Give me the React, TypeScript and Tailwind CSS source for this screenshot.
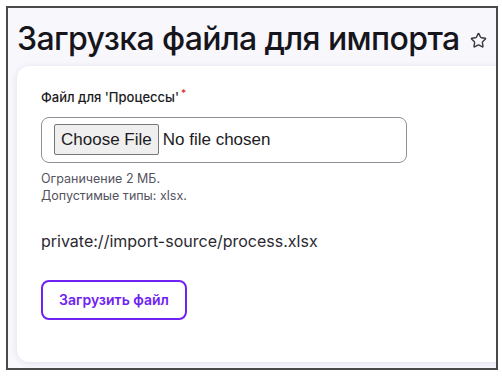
import { Star } from "lucide-react";

const INTER = { fontFamily: "Inter, 'Noto Sans', sans-serif" };

export default function App() {
    return (
        <div className="w-[502px] h-[382px] bg-white pt-[6px] pl-[6px]" style={INTER}>
            <div className="w-[492px] h-[364px] border-2 border-[#4a4a4a] bg-[#f8f7fc] overflow-hidden flex flex-col">
                <div className="flex items-center h-[58px] pl-[9px] pt-[4px]">
                    <h1 className="text-[32px] leading-none tracking-[-0.6px] font-[450] text-[#16151c] whitespace-nowrap">
                        Загрузка файла для импорта
                    </h1>
                    <Star size={17} strokeWidth={2} className="ml-[10px] mt-[2px] shrink-0 text-[#3a3a3a]" />
                </div>

                <div className="ml-[9px] w-[520px] h-[296px] bg-white rounded-xl shadow-[0_1px_6px_rgba(60,50,120,0.12)] pl-6 pt-[22px]">
                    <label className="block text-[13px] font-medium text-[#1c1b22]">
                        Файл для 'Процессы'
                        <span className="text-[#dc2626] ml-[2px] align-top text-[10px] leading-none">*</span>
                    </label>

                    <div className="mt-[9px] w-[366px] h-[46px] border border-[#8f8f99] rounded-lg flex items-center pl-3">
                        <input
                            type="file"
                            className="text-[17px] text-[#1c1b22] file:mr-[4px] file:px-[6px] file:py-[2px] file:border file:border-[#767676] file:bg-[#efefef] file:rounded-[2px] file:text-[#1c1b22]"
                            style={{ fontFamily: "'Liberation Sans', Arial, sans-serif" }}
                        />
                    </div>

                    <div className="mt-[7px] text-[12.5px] leading-[17px] text-[#55535f]">
                        <p>Ограничение 2 МБ.</p>
                        <p>Допустимые типы: xlsx.</p>
                    </div>

                    <p className="mt-[25px] text-[16px] text-[#2a2930]">private://import-source/process.xlsx</p>

                    <button className="mt-[27px] w-[146px] h-[40px] border-2 border-[#6f22f2] rounded-lg text-[14px] font-semibold text-[#6f22f2]">
                        Загрузить файл
                    </button>
                </div>
            </div>
        </div>
    );
}
